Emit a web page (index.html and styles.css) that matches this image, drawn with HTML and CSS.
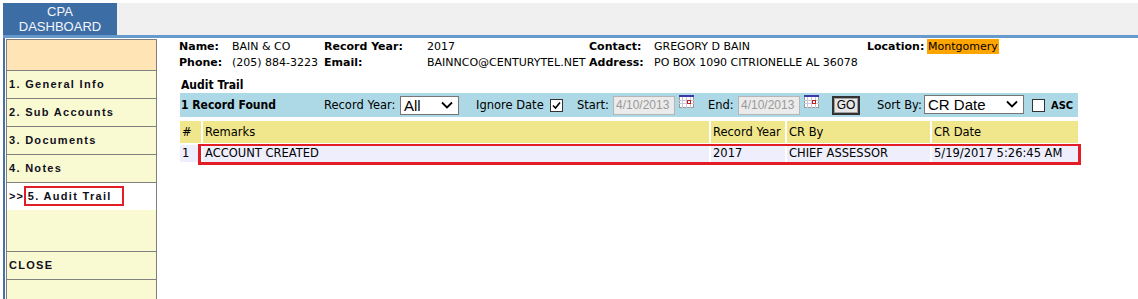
FILE: index.html
```html
<!DOCTYPE html>
<html>
<head>
    <title>CPA Dashboard - Audit Trail</title>
    <link rel="stylesheet" href="styles.css">
</head>
<body>
    <div class="topbar">
        <div class="tab">CPA<br>DASHBOARD</div>
    </div>

    <div class="layout">
        <div class="side">
            <div class="side-head"></div>
            <div class="side-item">1. General Info</div>
            <div class="side-item">2. Sub Accounts</div>
            <div class="side-item">3. Documents</div>
            <div class="side-item">4. Notes</div>
            <div class="side-item current">&gt;&gt;<span class="mark">5. Audit Trail</span></div>
            <div class="side-gap"></div>
            <div class="side-item">CLOSE</div>
            <div class="side-fill"></div>
        </div>

        <div class="main">
            <div class="info">
                <span class="lbl">Name:</span><span>BAIN &amp; CO</span>
                <span class="lbl">Record Year:</span><span>2017</span>
                <span class="lbl">Contact:</span><span>GREGORY D BAIN</span>
                <span class="lbl">Location:</span><span><span class="loc">Montgomery</span></span>

                <span class="lbl">Phone:</span><span>(205) 884-3223</span>
                <span class="lbl">Email:</span><span>BAINNCO@CENTURYTEL.NET</span>
                <span class="lbl">Address:</span><span>PO BOX 1090 CITRIONELLE AL 36078</span>
                <span></span><span></span>
            </div>

            <div class="section-title">Audit Trail</div>

            <div class="toolbar">
                <span class="found">1 Record Found</span>
                <span class="tlabel w-year">Record Year:</span>
                <div class="select sel-year">
                    <span>All</span>
                    <svg width="12" height="8" viewBox="0 0 12 8"><path d="M1 1.5 L6 6.5 L11 1.5" fill="none" stroke="#000" stroke-width="1.8"/></svg>
                </div>
                <span class="tlabel w-ignore">Ignore Date</span>
                <span class="check">
                    <svg width="11" height="11" viewBox="0 0 11 11"><path d="M2 5.5 L4.5 8 L9 2.5" fill="none" stroke="#000" stroke-width="1.6"/></svg>
                </span>
                <span class="tlabel w-start">Start:</span>
                <span class="date">4/10/2013</span>
                <svg class="cal" width="15" height="13" viewBox="0 0 15 13">
                    <rect x="0.5" y="0.5" width="14" height="12" fill="#fff" stroke="#999"/>
                    <rect x="0" y="0" width="15" height="2" fill="#3a3aa8"/>
                    <path d="M0 5.5 H15 M0 8.5 H15 M3.5 2 V13 M7.5 2 V13 M11.5 2 V13" stroke="#c8c8d8" stroke-width="1"/>
                    <rect x="8.5" y="5.5" width="3" height="3" fill="none" stroke="#c02020"/>
                </svg>
                <span class="tlabel w-end">End:</span>
                <span class="date">4/10/2013</span>
                <svg class="cal" width="15" height="13" viewBox="0 0 15 13">
                    <rect x="0.5" y="0.5" width="14" height="12" fill="#fff" stroke="#999"/>
                    <rect x="0" y="0" width="15" height="2" fill="#3a3aa8"/>
                    <path d="M0 5.5 H15 M0 8.5 H15 M3.5 2 V13 M7.5 2 V13 M11.5 2 V13" stroke="#c8c8d8" stroke-width="1"/>
                    <rect x="8.5" y="5.5" width="3" height="3" fill="none" stroke="#c02020"/>
                </svg>
                <span class="go">GO</span>
                <span class="tlabel w-sort">Sort By:</span>
                <div class="select sel-sort">
                    <span>CR Date</span>
                    <svg width="12" height="8" viewBox="0 0 12 8"><path d="M1 1.5 L6 6.5 L11 1.5" fill="none" stroke="#000" stroke-width="1.8"/></svg>
                </div>
                <span class="check asc-box"></span>
                <span class="asc">ASC</span>
            </div>

            <div class="grid head">
                <div>#</div>
                <div>Remarks</div>
                <div>Record Year</div>
                <div>CR By</div>
                <div>CR Date</div>
            </div>
            <div class="grid row">
                <div>1</div>
                <div>ACCOUNT CREATED</div>
                <div>2017</div>
                <div>CHIEF ASSESSOR</div>
                <div>5/19/2017 5:26:45 AM</div>
                <span class="hl-box"></span>
            </div>
        </div>
    </div>
</body>
</html>
```

FILE: styles.css
```css
body {
    margin: 0;
    padding: 3px 0 0 3px;
    font-family: "DejaVu Sans", Verdana, sans-serif;
    font-size: 11px;
    color: #000;
    height: 296px;
    overflow: hidden;
}
.topbar {
    display: flex;
    height: 32px;
    background-color: #f0f0f0;
    border-bottom: 3px solid #6699cc;
}
.tab {
    width: 114px;
    background-color: #3d6da5;
    color: #f4f6fb;
    font-family: "Liberation Sans", Arial, sans-serif;
    font-size: 13px;
    line-height: 15px;
    text-align: center;
    padding-top: 1px;
}
.layout {
    display: flex;
    border-left: 2px solid #4a70a6;
    padding-left: 1px;
    height: 261px;
}
.side {
    width: 149px;
    margin-top: 1px;
    border: 1px solid #808080;
    border-bottom: none;
    background-color: #fafad2;
    display: flex;
    flex-direction: column;
    font-family: "Liberation Sans", Arial, sans-serif;
    font-weight: bold;
    font-size: 11px;
    letter-spacing: 1.3px;
    color: #101020;
}
.side-head {
    height: 30px;
    background-color: #ffe4b5;
    border-bottom: 1px solid #808080;
}
.side-item {
    height: 27px;
    line-height: 27px;
    padding-left: 2px;
    border-bottom: 1px solid #808080;
}
.side-item.current {
    background-color: #fff;
    border-bottom: none;
    letter-spacing: 1px;
}
.mark {
    display: inline-block;
    border: 2px solid #e31d25;
    line-height: 16px;
    padding: 0 10px 0 2px;
    margin-left: 0;
    letter-spacing: 1.3px;
}
.side-gap {
    height: 41px;
    border-bottom: 1px solid #808080;
}
.side-item:last-of-type {
    height: 26px;
}
.side-fill {
    flex: 1;
}
.main {
    margin-left: 22px;
    margin-top: 1px;
    width: 899px;
}
.info {
    display: grid;
    grid-template-columns: 53px 92px 103px 162px 65px 213px 60px auto;
    grid-auto-rows: 16px;
    line-height: 16px;
}
.lbl {
    font-weight: bold;
}
.loc {
    background-color: #ffa500;
    padding: 1px 1px;
}
.section-title {
    margin-top: 6px;
    padding-left: 2px;
    height: 16px;
    line-height: 16px;
    font-family: "DejaVu Sans Condensed", Tahoma, sans-serif;
    font-weight: bold;
    font-size: 12px;
}
.toolbar {
    margin-left: 1px;
    height: 24px;
    background-color: #add8e6;
    display: flex;
    align-items: center;
    font-size: 11.5px;
}
.found {
    width: 143px;
    padding-left: 1px;
    font-weight: bold;
    font-size: 12px;
    font-family: "DejaVu Sans Condensed", Tahoma, sans-serif;
}
.tlabel {
    display: inline-block;
}
.w-year { width: 76px; }
.w-ignore { width: 74px; margin-left: 17px; }
.w-start { width: 36px; margin-left: 14px; }
.w-end { width: 30px; margin-left: 14px; }
.w-sort { width: 47px; margin-left: 17px; }
.select {
    box-sizing: border-box;
    height: 19px;
    border: 1px solid #767676;
    background-color: #fff;
    display: flex;
    align-items: center;
    justify-content: space-between;
    padding: 0 5px 0 3px;
    font-family: "Liberation Sans", Arial, sans-serif;
    font-size: 15px;
}
.sel-year { width: 59px; }
.sel-sort { width: 100px; margin-top: -2px; }
.check {
    box-sizing: border-box;
    width: 13px;
    height: 13px;
    border: 1px solid #333;
    background-color: #fff;
    display: flex;
    align-items: center;
    justify-content: center;
}
.date {
    box-sizing: border-box;
    width: 62px;
    height: 19px;
    border: 1px solid #b5b5b5;
    background-color: #ebebeb;
    color: #9a9a9a;
    font-family: "Liberation Sans", Arial, sans-serif;
    font-size: 12px;
    line-height: 17px;
    padding-left: 2px;
}
.cal {
    margin-left: 4px;
    align-self: flex-start;
    margin-top: 2px;
}
.go {
    box-sizing: border-box;
    width: 28px;
    height: 19px;
    margin-left: 13px;
    border: 2px solid #333;
    box-shadow: inset 0 0 0 1px #a0a0a0;
    background-color: #e6e6e6;
    text-align: center;
    line-height: 15px;
    font-family: "Liberation Sans", Arial, sans-serif;
    font-size: 12px;
}
.asc-box {
    margin-left: 8px;
}
.asc {
    margin-left: 6px;
    font-weight: bold;
    font-size: 11px;
    font-family: "DejaVu Sans Condensed", Tahoma, sans-serif;
}
.grid {
    display: grid;
    grid-template-columns: 21px 506px 74px 143px 146px;
    column-gap: 2px;
    margin-left: 1px;
    font-size: 11.5px;
}
.grid div {
    padding-left: 2px;
    overflow: hidden;
    white-space: nowrap;
}
.head {
    margin-top: 4px;
}
.head div {
    height: 22px;
    line-height: 22px;
    background-color: #f0e68c;
}
.row {
    position: relative;
    margin-top: 2px;
}
.row div {
    height: 17px;
    line-height: 17px;
    background-color: #eeeefc;
}
.hl-box {
    position: absolute;
    left: 18px;
    right: -3px;
    top: -1px;
    bottom: -3px;
    border: 3px solid #e31d25;
    border-top-width: 2px;
}
```
